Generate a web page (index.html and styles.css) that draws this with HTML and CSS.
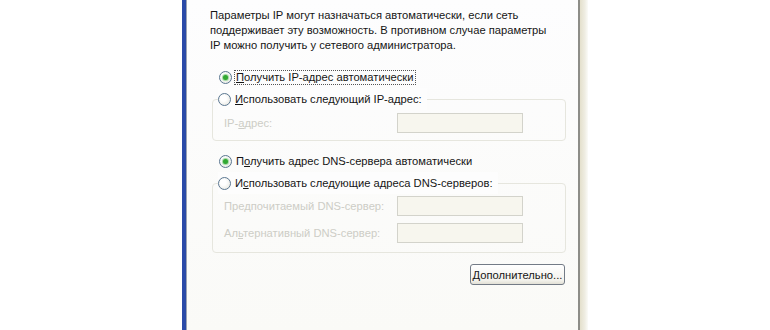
FILE: index.html
```html
<!DOCTYPE html>
<html lang="ru">
<head>
  <meta charset="utf-8">
  <link rel="stylesheet" href="styles.css">
</head>
<body>
  <!-- окно свойств TCP/IP, видна только часть вкладки -->
  <div class="window">
    <div class="page">
      <p class="intro">Параметры IP могут назначаться автоматически, если сеть<br>поддерживает эту возможность. В противном случае параметры<br>IP можно получить у сетевого администратора.</p>

      <label class="radio checked">
        <span class="dot"></span>
        <span class="caption focus"><u>П</u>олучить IP-адрес автоматически</span>
      </label>

      <fieldset class="group">
        <legend>
          <label class="radio">
            <span class="dot"></span>
            <span class="caption"><u>И</u>спользовать следующий IP-адрес:</span>
          </label>
        </legend>
        <div class="field">
          <span class="name">IP-<u>а</u>дрес:</span>
          <span class="input"></span>
        </div>
      </fieldset>

      <label class="radio checked">
        <span class="dot"></span>
        <span class="caption">П<u>о</u>лучить адрес DNS-сервера автоматически</span>
      </label>

      <fieldset class="group dns">
        <legend>
          <label class="radio">
            <span class="dot"></span>
            <span class="caption">И<u>с</u>пользовать следующие адреса DNS-серверов:</span>
          </label>
        </legend>
        <div class="field">
          <span class="name">Пре<u>д</u>почитаемый DNS-сервер:</span>
          <span class="input"></span>
        </div>
        <div class="field">
          <span class="name">Ал<u>ь</u>тернативный DNS-сервер:</span>
          <span class="input"></span>
        </div>
      </fieldset>

      <div class="actions">
        <button class="button"><u>Д</u>ополнительно...</button>
      </div>
    </div>
    <div class="side"></div>
  </div>
</body>
</html>
```

FILE: styles.css
```css
* {
  margin: 0; padding: 0; box-sizing: border-box;
}
body {
  background: #fff;
  font-family: "Liberation Sans", Arial, sans-serif;
  font-size: 11.2px;
  color: #151515;
}

/* рамка окна: синяя кромка слева, бежевая полоса справа */
.window {
  display: flex;
  width: 406px;
  height: 330px;
  margin-left: 182px;
  border-left: 4px solid #2a4aa8;
}
.page {
  flex: 1;
  border-left: 1px solid #9aa3b4;
  border-right: 2px solid #8d8d88;
  background: linear-gradient(#fdfdfe, #fafaf7);
  padding: 8px 12px 0 23px;
}
.side {
  width: 8px;
  background: linear-gradient(to right, #e4e0cc, #efede2 60%, #fbfbf8);
}

.intro {
  line-height: 15px;
  white-space: nowrap;
}

/* переключатели */
.radio {
  display: flex;
  align-items: center;
  height: 22px;
  padding-left: 9px;
}
.intro + .radio {
  margin-top: 13px;
}
.dot {
  width: 13px; height: 13px;
  border-radius: 50%;
  border: 1px solid #5b7791;
  background: radial-gradient(circle at 40% 40%, #fff 30%, #e2e2da);
  margin-right: 2px;
  position: relative;
}
.checked .dot::after {
  content: "";
  position: absolute;
  top: 3px; left: 3px;
  width: 5px; height: 5px;
  border-radius: 50%;
  background: #32a832;
  box-shadow: 0 0 1px 1px #9bd59b;
}
.caption {
  padding: 0 1px;
  line-height: 13px;
  border: 1px dotted transparent;
}
.caption.focus {
  border-color: #555;
  padding-right: 2px;
}

/* групповые рамки */
.group {
  margin: 0 0 0 2px;
  border: 1px solid #e6e6de;
  border-radius: 4px;
  padding: 3px 10px 7px 11px;
}
.group legend {
  margin-left: -6px;
}
.group legend .radio {
  padding-left: 0;
  padding-right: 3px;
  background: #fdfdfd;
}
.group + .radio {
  margin-top: 9px;
}
.dns {
  padding-top: 2px;
  padding-bottom: 9px;
}

.field {
  display: grid;
  grid-template-columns: 173px 126px;
  align-items: center;
  color: #cdcdc6;
}
.field + .field {
  margin-top: 7px;
}
.input {
  height: 20px;
  border: 1px solid #d3d3cb;
  background: #f7f6ee;
}

.actions {
  display: flex;
  justify-content: flex-end;
  margin-top: 11px;
  padding-right: 1px;
}
.button {
  font: inherit;
  color: #151515;
  width: 95px;
  height: 21px;
  border: 1px solid #737b86;
  border-radius: 3px;
  background: linear-gradient(#ffffff, #f3f2ec 80%, #e2e0d6);
  cursor: pointer;
}
```
